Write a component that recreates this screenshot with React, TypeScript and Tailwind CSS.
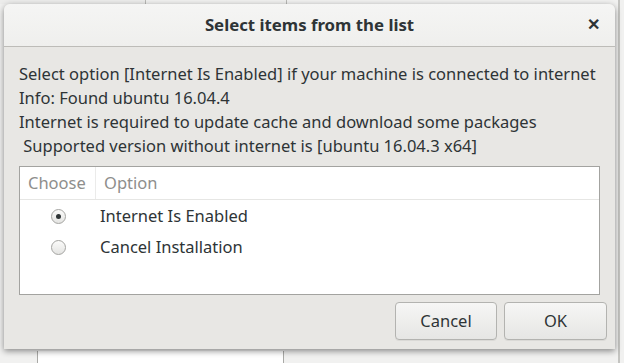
import React from "react";

function Radio({ checked }: { checked?: boolean }) {
    return (
        <span className="flex h-[15px] w-[15px] items-center justify-center rounded-full border border-[#a4a4a1] bg-gradient-to-b from-[#fbfbfa] to-[#e4e4e2] shadow-[0_1px_0_rgba(255,255,255,0.8)]">
            {checked && <span className="h-[5px] w-[5px] rounded-full bg-[#2e3436]" />}
        </span>
    );
}

function DialogButton({ label, width }: { label: string; width: string }) {
    return (
        <button
            className={`${width} h-[38px] rounded-[4px] border border-[#b3b3b0] bg-gradient-to-b from-[#f6f6f5] to-[#e6e6e4] text-[16.5px] text-[#2e3436] shadow-[0_1px_0_rgba(0,0,0,0.06)]`}
        >
            {label}
        </button>
    );
}

export default function App() {
    const lines = [
        "Select option [Internet Is Enabled] if your machine is connected to internet",
        "Info: Found ubuntu 16.04.4",
        "Internet is required to update cache and download some packages",
        " Supported version without internet is [ubuntu 16.04.3 x64]",
    ];
    const options = [
        { label: "Internet Is Enabled", checked: true },
        { label: "Cancel Installation", checked: false },
    ];

    return (
        <div
            className="relative h-[363px] w-[624px] overflow-hidden bg-[#f1f1f0]"
            style={{ fontFamily: '"Noto Sans", "Open Sans", sans-serif' }}
        >
            {/* window behind the dialog */}
            <div className="flex h-[4px] items-start">
                <div className="h-full w-[146px] border-r border-[#b8b8b5] bg-[#ececeb]" />
                <div className="h-full w-[141px] border-r border-[#b8b8b5] bg-[#f0f0ef]" />
            </div>
            <div className="absolute right-[4px] top-0 h-full w-[2px] bg-[#c4c4c1]" />
            <div className="absolute bottom-0 left-[37px] h-[12px] w-[247px] border-x border-[#a9a9a6] bg-white" />

            {/* dialog */}
            <div className="absolute left-[4px] top-[4px] flex h-[345px] w-[611px] flex-col rounded-t-[6px] bg-[#e8e7e4] shadow-[0_2px_6px_rgba(0,0,0,0.45)]">
                <div className="relative flex h-[43px] shrink-0 items-center justify-center rounded-t-[6px] border-b border-[#bdbcb8] bg-gradient-to-b from-[#f5f5f4] to-[#efefed]">
                    <span className="text-[16.8px] font-bold text-[#2e3436]">Select items from the list</span>
                    <span className="absolute right-[15px] top-[12px] text-[16px] font-bold leading-none text-[#2e3436]">✕</span>
                </div>

                <div className="flex flex-1 flex-col px-[15px] pt-[15px]">
                    {lines.map((l) => (
                        <div key={l} className="h-[24px] whitespace-pre text-[16.5px] leading-[24px] text-[#2e3436]">
                            {l}
                        </div>
                    ))}

                    <div className="mt-[8px] h-[129px] border border-[#a3a3a0] bg-white">
                        <div className="flex h-[33px] border-b border-[#e6e6e4] text-[16.5px] text-[#8e8e8c]">
                            <div className="flex w-[76px] items-center border-r border-[#ebebea] pl-[8px]">Choose</div>
                            <div className="flex items-center pl-[8px]">Option</div>
                        </div>
                        <div className="pt-[1px]">
                            {options.map((o) => (
                                <div key={o.label} className="flex h-[31px] items-center text-[16.5px] text-[#2e3436]">
                                    <div className="flex w-[76px] justify-center">
                                        <Radio checked={o.checked} />
                                    </div>
                                    <span className="pl-[4px]">{o.label}</span>
                                </div>
                            ))}
                        </div>
                    </div>

                    <div className="-mr-[7px] mt-[7px] flex justify-end gap-[7px]">
                        <DialogButton label="Cancel" width="w-[102px]" />
                        <DialogButton label="OK" width="w-[103px]" />
                    </div>
                </div>
            </div>
        </div>
    );
}
